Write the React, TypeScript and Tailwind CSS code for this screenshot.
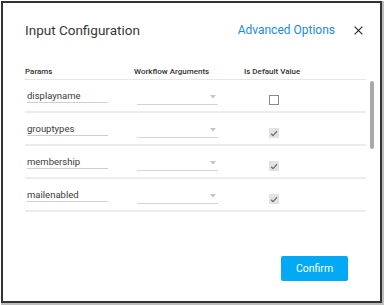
import React from 'react';

const rows = [
  { name: 'displayname', isDefault: false },
  { name: 'grouptypes', isDefault: true },
  { name: 'membership', isDefault: true },
  { name: 'mailenabled', isDefault: true },
];

const Caret = () => (
  <svg width="6" height="4" viewBox="0 0 6 4" className="absolute right-[2px] top-[4px]">
    <path d="M0 0 L6 0 L3 3.5 Z" fill="#c4c4c4" />
  </svg>
);

const CheckBox = ({ checked }: { checked: boolean }) =>
  checked ? (
    <div className="w-[10px] h-[10px] bg-[#e3e3e3] flex items-center justify-center">
      <svg width="8" height="7" viewBox="0 0 8 7">
        <path d="M1 3.8 L3 5.6 L7 1.2" stroke="#707070" strokeWidth="1.3" fill="none" />
      </svg>
    </div>
  ) : (
    <div className="w-[10px] h-[10px] border border-[#8a8a8a] bg-white" />
  );

export default function App() {
  return (
    <div className="w-[384px] h-[305px] bg-white relative" style={{ fontFamily: 'Roboto, "Liberation Sans", sans-serif' }}>
      <div className="ml-[1px] mt-[1px] w-[381px] h-[302px] border-2 border-[#333] shadow-[1px_1px_0_1px_#bdbdbd] flex flex-col relative">
        {/* Header */}
        <div className="flex items-center h-[20px] mt-[17px] pl-[22px] pr-[17px]">
          <div className="text-[13.5px] text-[#383838] flex-1">Input Configuration</div>
          <div className="text-[12px] text-[#1a8cd8] mr-[1px]">Advanced Options</div>
          <svg width="9" height="9" viewBox="0 0 9 9" className="ml-[18px]">
            <path d="M0.6 0.6 L8.4 8.4 M8.4 0.6 L0.6 8.4" stroke="#333" strokeWidth="1.3" />
          </svg>
        </div>

        {/* Table */}
        <div className="ml-[22px] w-[341px] mt-[24px]">
          <div className="flex items-center h-[16px] border-b border-[#e6e6e6] text-[8px] font-medium text-[#333]">
            <div className="w-[109px]">Params</div>
            <div className="w-[110px]">Workflow Arguments</div>
            <div>Is Default Value</div>
          </div>
          {rows.map((r) => (
            <div key={r.name} className="flex items-start h-[33px] border-b-2 border-[#ececec]">
              <div className="w-[112px] pl-[2px] mt-[9px]">
                <div className="w-[81px] h-[14px] border-b border-[#cfcfcf] text-[9.5px] text-[#3a3a3a] leading-[13px]">
                  {r.name}
                </div>
              </div>
              <div className="w-[132px] mt-[11px]">
                <div className="relative w-[81px] h-[14px] border-b border-[#d4d4d4]">
                  <Caret />
                </div>
              </div>
              <div className="mt-[15px]">
                <CheckBox checked={r.isDefault} />
              </div>
            </div>
          ))}
        </div>

        {/* Scrollbar */}
        <div className="absolute left-[367px] top-[78px] w-[4px] h-[68px] rounded-full bg-[#a9a9a9]" />

        {/* Footer */}
        <div className="mt-auto mb-[20px] flex justify-end pr-[32px]">
          <button className="w-[67px] h-[25px] rounded-[2px] bg-[#03a9f4] text-white text-[10.5px]">Confirm</button>
        </div>
      </div>
    </div>
  );
}
